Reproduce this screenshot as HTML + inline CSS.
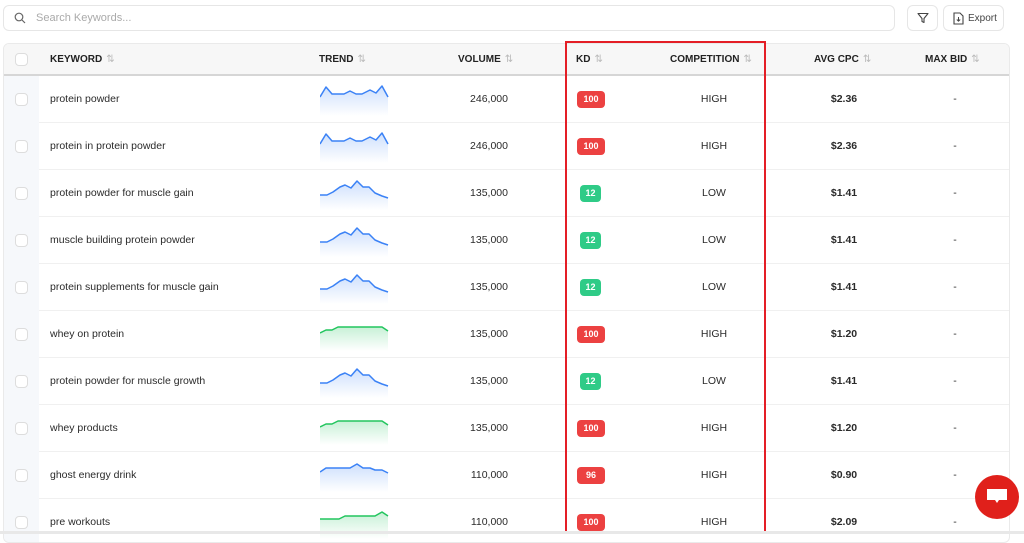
<!DOCTYPE html>
<html><head><style>
*{box-sizing:border-box;margin:0;padding:0}
body{width:1024px;height:534px;overflow:hidden;background:#fff;font-family:"Liberation Sans",sans-serif;color:#333;position:relative}
.search{position:absolute;left:3px;top:5px;width:892px;height:26px;border:1px solid #e6e6e6;border-radius:6px}
.search span{position:absolute;left:32px;top:6px;font-size:11px;color:#aaa}
.btn{position:absolute;top:5px;height:26px;border:1px solid #e6e6e6;border-radius:6px;font-size:10px;color:#444}
.table{position:absolute;left:3px;top:43px;width:1007px;height:500px;border:1px solid #eaeaea;border-radius:6px;overflow:hidden}
.hdr{position:absolute;left:0;top:0;width:100%;height:32px;background:#f7f7f7;border-bottom:2px solid #d6d6d6}
.h{position:absolute;top:10px;font-size:10px;font-weight:bold;color:#222}
.h i{font-style:normal;color:#bbb;font-weight:normal;margin-left:4px;font-size:10px}
.row{position:absolute;left:0;width:100%;height:47px;border-bottom:1px solid #f0f0f0;font-size:10.5px;color:#2a2a2a}
.row .c0{position:absolute;left:0;top:0;width:35px;height:47px;background:#f6f8fb}
.cb{position:absolute;left:11px;width:13px;height:13px;border:1px solid #ddd;border-radius:4px;background:#fff}
.row .t{position:absolute;top:17px}
.kd{position:absolute;top:15px;height:17px;border-radius:4px;color:#fff;font-size:9px;font-weight:bold;text-align:center;line-height:17px}
.r{background:#ec4141;width:28px;left:573px}.g{background:#2fcb87;width:21px;left:576px}
svg.sp{position:absolute;left:316px;top:8px}
</style></head><body>
<div class="search"><svg style="position:absolute;left:10px;top:6px" width="12" height="12" viewBox="0 0 12 12"><circle cx="5" cy="5" r="3.8" fill="none" stroke="#666" stroke-width="1.2"/><path d="M8 8l3 3" stroke="#666" stroke-width="1.2"/></svg><span>Search Keywords...</span></div>
<div class="btn" style="left:907px;width:31px"><svg style="position:absolute;left:9px;top:6px" width="12" height="12" viewBox="0 0 12 12"><path d="M1 1.5h10L7 6.5v4L5 9.5v-3z" fill="none" stroke="#444" stroke-width="1.1" stroke-linejoin="round"/></svg></div>
<div class="btn" style="left:943px;width:61px"><svg style="position:absolute;left:9px;top:6px" width="11" height="13" viewBox="0 0 11 13"><path d="M1 1h6l3 3v8H1z" fill="none" stroke="#444" stroke-width="1.1"/><path d="M5.5 5v4M3.8 7.5l1.7 1.7 1.7-1.7" fill="none" stroke="#444" stroke-width="1"/></svg><span style="position:absolute;left:24px;top:7px">Export</span></div>
<div class="table">
<div class="hdr">
<div class="cb" style="top:9px"></div>
<div class="h" style="left:46px">KEYWORD<i>⇅</i></div>
<div class="h" style="left:315px">TREND<i>⇅</i></div>
<div class="h" style="left:454px">VOLUME<i>⇅</i></div>
<div class="h" style="left:572px">KD<i>⇅</i></div>
<div class="h" style="left:666px">COMPETITION<i>⇅</i></div>
<div class="h" style="left:810px">AVG CPC<i>⇅</i></div>
<div class="h" style="left:921px">MAX BID<i>⇅</i></div>
</div>
<div id="rows"></div>
</div>
<div style="position:absolute;left:565px;top:41px;width:201px;height:492px;border:2px solid #e41e26"></div>
<div style="position:absolute;left:975px;top:475px;width:44px;height:44px;border-radius:50%;background:#e0201b"><svg style="position:absolute;left:11px;top:12px" width="22" height="20" viewBox="0 0 22 20"><path d="M1 2h20v11H13l-2 3-2-3H1z" fill="#fff"/></svg></div>
<div style="position:absolute;left:0;top:531px;width:1024px;height:3px;background:#e8e8e8"></div>
<script>
var P={A:["#3b82f6","0,13 6,3 12,10 24,10 30,7 36,10 42,10 50,6 56,9 62,2 68,13"],
B:["#3b82f6","0,17 7,17 13,14 20,9 25,7 31,10 37,3 43,9 49,9 55,15 62,18 68,20"],
C:["#22c55e","0,14 6,11 12,11 18,8 62,8 68,12"],
D:["#3b82f6","0,12 6,8 30,8 37,4 43,8 50,8 55,10 62,10 68,13"],
E:["#22c55e","0,12 19,12 25,9 55,9 62,5 68,9"]};
var d=[["protein powder","A","246,000",100,"HIGH","$2.36"],["protein in protein powder","A","246,000",100,"HIGH","$2.36"],["protein powder for muscle gain","B","135,000",12,"LOW","$1.41"],["muscle building protein powder","B","135,000",12,"LOW","$1.41"],["protein supplements for muscle gain","B","135,000",12,"LOW","$1.41"],["whey on protein","C","135,000",100,"HIGH","$1.20"],["protein powder for muscle growth","B","135,000",12,"LOW","$1.41"],["whey products","C","135,000",100,"HIGH","$1.20"],["ghost energy drink","D","110,000",96,"HIGH","$0.90"],["pre workouts","E","110,000",100,"HIGH","$2.09"]];
var h="";d.forEach(function(r,i){var p=P[r[1]],id="g"+i;
h+='<div class="row" style="top:'+(32+i*47)+'px"><div class="c0"></div><div class="cb" style="top:17px"></div><div class="t" style="left:46px">'+r[0]+'</div>'+
'<svg class="sp" width="70" height="32" viewBox="0 0 70 32"><defs><linearGradient id="'+id+'" x1="0" y1="0" x2="0" y2="1"><stop offset="0" stop-color="'+p[0]+'" stop-opacity=".25"/><stop offset="1" stop-color="'+p[0]+'" stop-opacity="0"/></linearGradient></defs><polygon points="0,32 '+p[1]+' 68,32" fill="url(#'+id+')"/><polyline points="'+p[1]+'" fill="none" stroke="'+p[0]+'" stroke-width="1.5" stroke-linejoin="round"/></svg>'+
'<div class="t" style="left:420px;width:84px;text-align:right">'+r[2]+'</div><div class="kd '+(r[3]>50?"r":"g")+'">'+r[3]+'</div>'+
'<div class="t" style="left:670px;width:80px;text-align:center">'+r[4]+'</div><div class="t" style="left:800px;width:80px;text-align:center;font-weight:bold">'+r[5]+'</div><div class="t" style="left:940px;width:22px;text-align:center">-</div></div>';});
document.getElementById("rows").innerHTML=h;
</script>
</body></html>
